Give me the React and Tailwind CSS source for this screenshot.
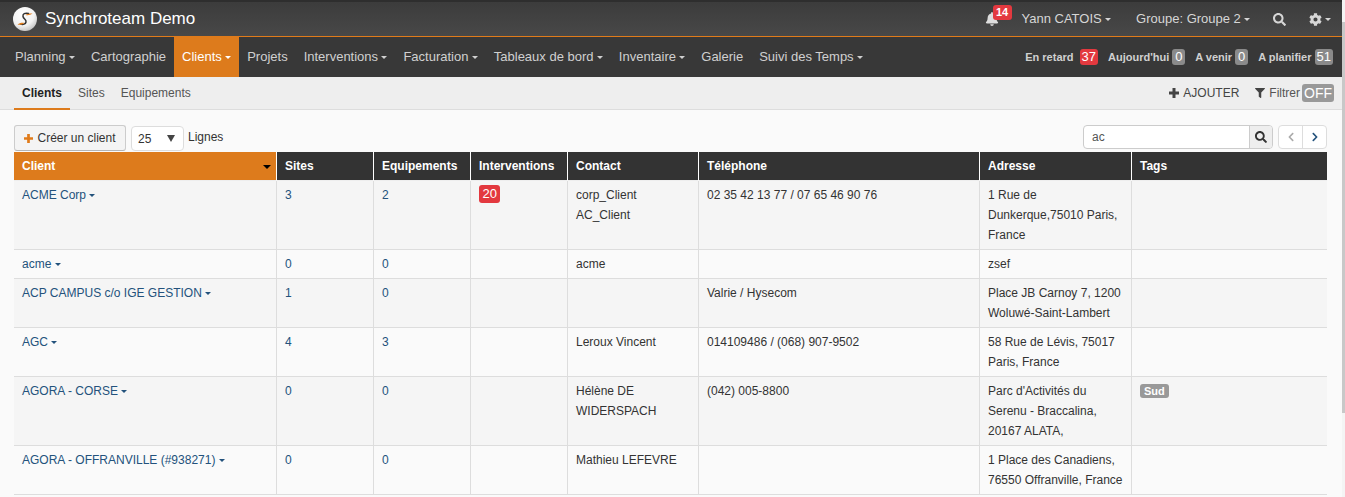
import React from "react";
import { FaBell, FaSearch, FaCog, FaFilter, FaChevronLeft, FaChevronRight } from "react-icons/fa";

function Caret() {
  return <span className="inline-block w-0 h-0 ml-[3.33px] align-middle border-x-[3px] border-t-[3px] border-x-transparent border-t-current" />;
}

function Plus({ className = "" }) {
  return (
    <svg viewBox="0 0 10 10" className={"fill-current " + className}>
      <path d="M3.5 0h3v3.5H10v3H6.5V10h-3V6.5H0v-3h3.5z" />
    </svg>
  );
}

function Logo() {
  return (
    <svg width="24" height="24" viewBox="0 0 24 24" className="shrink-0">
      <defs>
        <radialGradient id="lg" cx="40%" cy="30%" r="80%">
          <stop offset="0%" stopColor="#ffffff" />
          <stop offset="60%" stopColor="#f2f2f2" />
          <stop offset="100%" stopColor="#b5b5b5" />
        </radialGradient>
      </defs>
      <circle cx="12" cy="12" r="12" fill="url(#lg)" />
      <path d="M15.5 6.5 C12 5.5 9.5 7 10 9.5 C10.5 12 13.5 12.5 13 15 C12.6 17 10 18 7.5 17" fill="none" stroke="#333" strokeWidth="1.5" strokeLinecap="round" />
      <path d="M12.5 8 C14 7 16 6.5 19.5 6.5 C17.5 8 15 8.5 12.5 8Z" fill="#e07b1a" />
      <path d="M4.5 17.5 C7 15.5 9.5 15.5 11.5 16 C9.5 17.8 7 18 4.5 17.5Z" fill="#e07b1a" />
    </svg>
  );
}

const mainNav = [
  ["Planning", true], ["Cartographie", false], ["Clients", true, true], ["Projets", false],
  ["Interventions", true], ["Facturation", true], ["Tableaux de bord", true], ["Inventaire", true],
  ["Galerie", false], ["Suivi des Temps", true],
];

const cols = [
  ["Client", "w-[263px]"], ["Sites", "w-[97px]"], ["Equipements", "w-[97px]"], ["Interventions", "w-[97px]"],
  ["Contact", "w-[131px]"], ["Téléphone", "w-[281px]"], ["Adresse", "w-[152px]"], ["Tags", "w-[195px]"],
];

const rows = [
  { c: "ACME Corp", s: "3", e: "2", i: "20", ct: ["corp_Client", "AC_Client"], t: "02 35 42 13 77 / 07 65 46 90 76", a: "1 Rue de Dunkerque,75010 Paris, France" },
  { c: "acme", s: "0", e: "0", ct: ["acme"], t: "", a: "zsef" },
  { c: "ACP CAMPUS c/o IGE GESTION", s: "1", e: "0", ct: [], t: "Valrie / Hysecom", a: "Place JB Carnoy 7, 1200 Woluwé-Saint-Lambert" },
  { c: "AGC", s: "4", e: "3", ct: ["Leroux Vincent"], t: "014109486 / (068) 907-9502", a: "58 Rue de Lévis, 75017 Paris, France" },
  { c: "AGORA - CORSE", s: "0", e: "0", ct: ["Hélène DE WIDERSPACH"], t: "(042) 005-8800", a: "Parc d'Activités du Serenu - Braccalina, 20167 ALATA,", tag: "Sud" },
  { c: "AGORA - OFFRANVILLE (#938271)", s: "0", e: "0", ct: ["Mathieu LEFEVRE"], t: "", a: "1 Place des Canadiens, 76550 Offranville, France" },
];

function Count({ label, n, red }) {
  return (
    <span className="flex items-center gap-[3px]">
      <span className="font-bold text-[11px] text-[#d0d0d0]">{label}</span>
      <span className={"h-[16px] min-w-[13px] rounded-[3px] text-[13px] leading-[16px] text-center text-white " + (red ? "bg-[#e3393f] ml-[3px] px-[2px]" : "bg-[#8a8a8a] px-[2px]")}>{n}</span>
    </span>
  );
}

const td = "border-r border-b border-[#dddddd] px-[8px] py-[4px] align-top leading-[20px]";

export default function App() {
  return (
    <div className="h-[497px] overflow-hidden flex bg-[#fafafa] text-[12px] text-[#333333] font-['Liberation_Sans',Arial,sans-serif]">
      <div className="flex-1 min-w-0">
        {/* top bar */}
        <div className="h-[37px] flex items-center pl-[13px] pr-[11px] border-b border-[#e07b1a] bg-gradient-to-b from-[#3c3c3c] to-[#484848] border-t-2 border-t-[#2e2e2e]">
          <Logo />
          <span className="ml-[8px] text-[17px] text-white">Synchroteam Demo</span>
          <div className="ml-auto flex items-center text-[13px] text-[#d6d6d6]">
            <span className="relative mr-[23px] text-[#dddddd]">
              <FaBell className="w-[14px] h-[14px]" />
              <span className="absolute -top-[7px] left-[8px] h-[15px] w-[19px] text-center rounded-[3px] bg-[#e3393f] text-white text-[11px] font-bold leading-[15px]">14</span>
            </span>
            <span>Yann CATOIS<Caret /></span>
            <span className="ml-[25px]">Groupe: Groupe 2<Caret /></span>
            <FaSearch className="ml-[22.5px] w-[13px] h-[13px]" />
            <span className="ml-[23px] flex items-center"><FaCog className="w-[13px] h-[13px]" /><Caret /></span>
          </div>
        </div>
        {/* main nav */}
        <div className="h-[40px] flex items-stretch bg-[#383838] pl-[7px] pr-[8px] text-[13px] text-[#d0d0d0]">
          {mainNav.map(([label, caret, active]) => (
            <div key={label} className={"flex items-center px-[8px] " + (active ? "bg-[#dd7b1c] text-white" : "")}>
              {label}{caret && <Caret />}
            </div>
          ))}
          <div className="ml-auto flex items-center gap-[10px] pr-[1px]">
            <Count label="En retard" n="37" red />
            <Count label="Aujourd'hui" n="0" />
            <Count label="A venir" n="0" />
            <Count label="A planifier" n="51" />
          </div>
        </div>
        {/* sub nav */}
        <div className="h-[33px] flex items-stretch bg-[#eeeeee] border-b border-[#dddddd] pl-[14px] pr-[8px] text-[#555555]">
          <div className="flex items-center px-[8px] font-bold text-[#222222] border-b-2 border-[#dd7b1c] -mb-px pt-[1px]">Clients</div>
          <div className="flex items-center px-[8px]">Sites</div>
          <div className="flex items-center px-[8px]">Equipements</div>
          <div className="ml-auto flex items-center text-[#444444]">
            <Plus className="w-[10px] h-[10px] mr-[4px] text-[#444444]" />
            <span>AJOUTER</span>
            <FaFilter className="ml-[16px] mr-[4px] w-[10px] h-[10px]" />
            <span className="text-[#555555]">Filtrer</span>
            <span className="ml-[2px] h-[18px] w-[32px] text-center rounded-[3px] bg-[#999999] text-white text-[14px] leading-[18px]">OFF</span>
          </div>
        </div>
        {/* toolbar */}
        <div className="mx-[14px] w-[1313px] pt-[15px]">
          <div className="h-[27px] flex items-start">
            <button className="h-[26px] w-[112px] flex items-center justify-center rounded-[3px] border border-[#cccccc] border-b-[#b5b5b5] bg-[#f4f4f4] text-[#333333]">
              <Plus className="w-[9px] h-[9px] mr-[4px] text-[#e07b1a]" />Créer un client
            </button>
            <div className="ml-[5px] mt-[1px] h-[25px] w-[53px] flex items-center justify-between pl-[6px] pr-[8px] rounded-[4px] border border-[#dddddd] bg-white">
              <span>25</span>
              <span className="w-0 h-0 border-x-[4px] border-t-[7px] border-x-transparent border-t-[#444444]" />
            </div>
            <span className="ml-[4px] leading-[24px]">Lignes</span>
            <div className="ml-auto h-[24px] w-[190px] flex rounded-[4px] border border-[#cccccc] bg-white overflow-hidden">
              <span className="flex-1 pl-[8px] leading-[22px] text-[#555555]">ac</span>
              <span className="w-[23px] flex items-center justify-center border-l border-[#cccccc] bg-[#eeeeee] text-[#333333]"><FaSearch className="w-[12px] h-[12px]" /></span>
            </div>
            <div className="ml-[5px] h-[24px] w-[49px] flex rounded-[4px] border border-[#dddddd] bg-white">
              <span className="flex-1 flex items-center justify-center border-r border-[#dddddd] text-[#aaaaaa]"><FaChevronLeft className="w-[10px] h-[10px]" /></span>
              <span className="flex-1 flex items-center justify-center text-[#23527c]"><FaChevronRight className="w-[10px] h-[10px]" /></span>
            </div>
          </div>
          {/* table */}
          <table className="table-fixed border-separate border-spacing-0 w-[1313px]">
            <thead>
              <tr className="h-[29px] text-white font-bold">
                {cols.map(([h, w], i) => (
                  <th key={h} className={w + " relative text-left px-[8px] border-r border-b border-r-white border-b-[#eeeeee] last:border-r-0 " + (i === 0 ? "bg-[#dd7b1c]" : "bg-[#333333]")}>
                    {h}
                    {i === 0 && <span className="absolute right-[5px] top-[13px] w-0 h-0 border-x-[4px] border-t-[4px] border-x-transparent border-t-black" />}
                  </th>
                ))}
              </tr>
            </thead>
            <tbody>
              {rows.map((r, i) => (
                <tr key={r.c} className={i % 2 === 0 ? "bg-[#f5f5f5]" : "bg-[#fafafa]"}>
                  <td className={td + " text-[#23527c]"}>{r.c}<Caret /></td>
                  <td className={td + " text-[#23527c]"}>{r.s}</td>
                  <td className={td + " text-[#23527c]"}>{r.e}</td>
                  <td className={td}>
                    {r.i && <span className="block w-fit h-[18px] px-[3.5px] rounded-[3px] bg-[#e3393f] text-white text-[13px] leading-[18px]">{r.i}</span>}
                  </td>
                  <td className={td}>{r.ct.map((x) => <div key={x}>{x}</div>)}</td>
                  <td className={td}>{r.t}</td>
                  <td className={td}>{r.a}</td>
                  <td className={td + " border-r-0"}>
                    {r.tag && <span className="block w-fit h-[14px] px-[4px] mt-[3px] rounded-[3px] bg-[#999999] text-white text-[11px] font-bold leading-[14px]">{r.tag}</span>}
                  </td>
                </tr>
              ))}
            </tbody>
          </table>
        </div>
      </div>
      {/* scrollbar */}
      <div className="w-[3px] shrink-0 bg-[#f4f4f4]">
        <div className="mt-[22px] h-[391px] bg-[#c8c8c8]" />
      </div>
    </div>
  );
}
